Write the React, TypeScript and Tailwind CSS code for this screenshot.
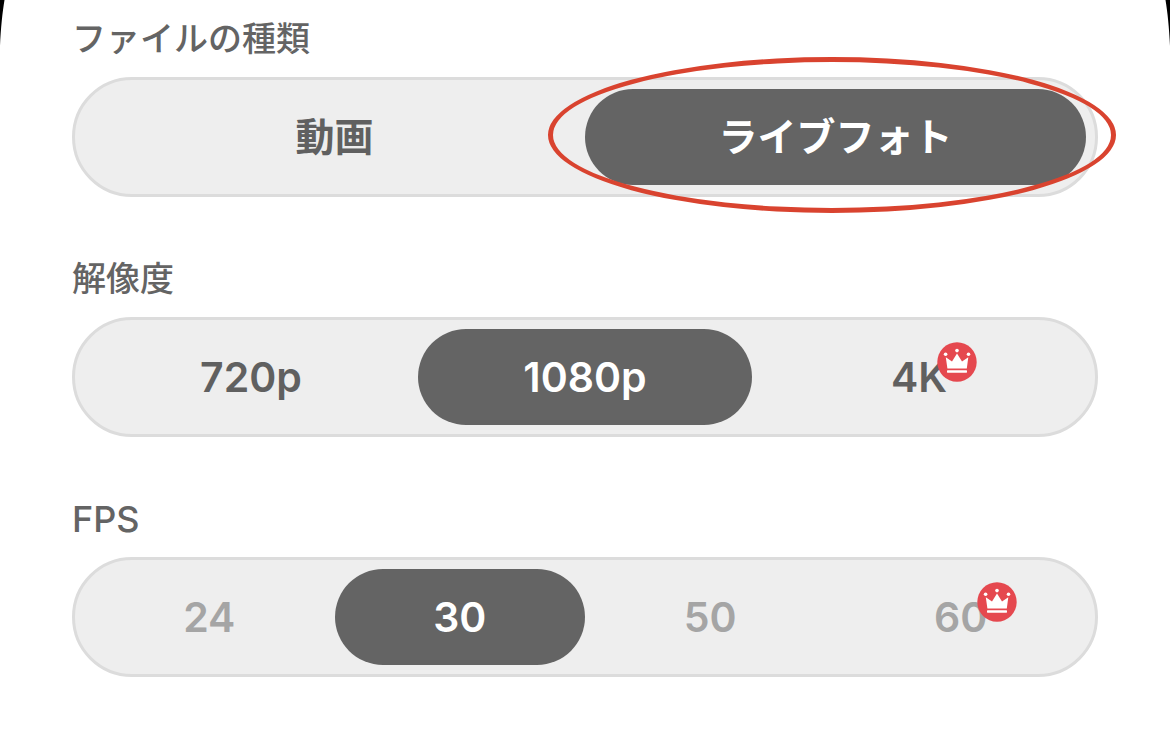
import React, { useId, useState } from "react";

type Option = {
  value: string;
  premium?: boolean;
  marked?: boolean;
};

const fileTypes: Option[] = [{ value: "動画" }, { value: "ライブフォト", marked: true }];
const resolutions: Option[] = [{ value: "720p" }, { value: "1080p" }, { value: "4K", premium: true }];
const frameRates: Option[] = [{ value: "24" }, { value: "30" }, { value: "50" }, { value: "60", premium: true }];

const CrownBadge = () => (
  <svg viewBox="0 0 40 40" className="absolute -top-[11px] left-full -ml-[10px] size-10" aria-hidden="true">
    <circle cx="20" cy="20" r="19.7" fill="#e5484f" />
    <g fill="#fff">
      <circle cx="8.6" cy="12.2" r="1.8" />
      <circle cx="20" cy="8.6" r="1.8" />
      <circle cx="31.5" cy="12.2" r="1.8" />
      <path d="M8.8 15.2 L15 19.4 L20 11.4 L25 19.4 L31.3 15.2 L29.8 26.6 H10.4 Z" />
      <rect x="10" y="28.2" width="20" height="2.5" rx="0.6" />
    </g>
  </svg>
);

const textColor = (selected: boolean, muted: boolean) => {
  if (selected) return "bg-[#646464] text-white";
  return muted ? "text-[#a5a5a5]" : "text-[#606060]";
};

type SegmentedProps = {
  title: string;
  options: Option[];
  initial: string;
  labelSize: string;
  optionSize: string;
  muted?: boolean;
};

const Segmented = ({ title, options, initial, labelSize, optionSize, muted = false }: SegmentedProps) => {
  const [current, setCurrent] = useState<string>(initial);
  const id = useId();

  return (
    <section className="flex flex-col gap-4">
      <h2 id={id} className={`h-11 leading-11 font-medium text-[#646464] ${labelSize}`}>{title}</h2>
      <div
        role="group"
        aria-labelledby={id}
        className="flex h-30 rounded-full border-3 border-[#dcdcdc] bg-[#eeeeee] p-[9px]"
      >
        {options.map((o) => (
          <button
            key={o.value}
            type="button"
            aria-pressed={o.value === current}
            onClick={() => setCurrent(o.value)}
            className={`relative flex flex-1 basis-0 items-center justify-center rounded-full leading-12 font-semibold ${optionSize} ${textColor(o.value === current, muted)}`}
          >
            <span className="relative">
              {o.value}
              {o.premium && <CrownBadge />}
            </span>
            {o.marked && (
              <span className="pointer-events-none absolute -top-8 -right-[30px] -bottom-7 -left-[37px] rounded-[50%] border-5 border-[#d9432f]" />
            )}
          </button>
        ))}
      </div>
    </section>
  );
};

export default function App() {
  return (
    <main className="relative flex min-h-screen flex-col gap-15 bg-white px-18 pt-[17px] pb-18 font-['Inter','Noto_Sans_CJK_JP',sans-serif]">
      {/* rounded screen edges */}
      <svg viewBox="0 0 5 48" className="absolute top-0 left-0 h-12 w-[5px]" aria-hidden="true">
        <path d="M0 0 H4.5 C2.5 12 0.8 28 0 46 Z" fill="#000" />
      </svg>
      <svg viewBox="0 0 5 48" className="absolute top-0 right-0 h-12 w-[5px]" aria-hidden="true">
        <path d="M5 0 H0.5 C2.5 12 4.2 28 5 46 Z" fill="#000" />
      </svg>

      <Segmented title="ファイルの種類" options={fileTypes} initial="ライブフォト" labelSize="text-[34px]" optionSize="text-[39px]" />
      <Segmented title="解像度" options={resolutions} initial="1080p" labelSize="text-[34px]" optionSize="text-[41px]" />
      <Segmented title="FPS" options={frameRates} initial="30" labelSize="text-[36px]" optionSize="text-[41px]" muted />
    </main>
  );
}
